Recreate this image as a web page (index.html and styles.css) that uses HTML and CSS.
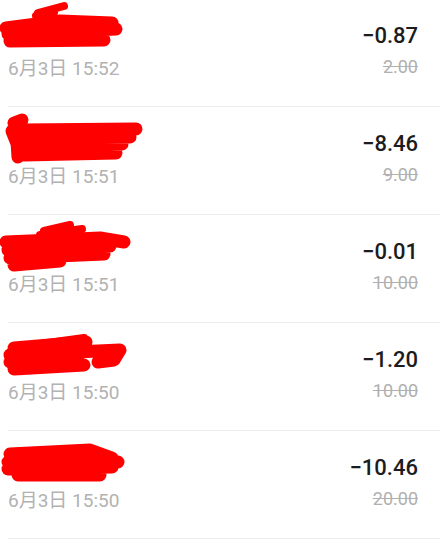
FILE: index.html
```html
<!DOCTYPE html>
<html lang="zh-CN">
<head>
    <meta charset="UTF-8">
    <meta name="viewport" content="width=device-width, initial-scale=1.0">
    <title>账单</title>
    <link rel="stylesheet" href="styles.css">
</head>
<body>
    <div class="list">
        <div class="row">
            <div class="info">
                <svg class="name" width="150" height="58" viewBox="0 0 150 58">
                    <path class="thin" d="M38 14 L64 7 M36 17 L54 13" />
                    <path d="M6 29 L60 22 L112 24 M8 35 L116 30 M10 42 L104 41" />
                </svg>
                <div class="date">6月3日 15:52</div>
            </div>
            <div class="money">
                <div class="amount">−0.87</div>
                <div class="origin">2.00</div>
            </div>
        </div>
        <div class="row">
            <div class="info">
                <svg class="name" width="150" height="58" viewBox="0 0 150 58">
                    <path d="M14 16 L22 13 M12 24 L20 44 M16 20 L18 50" />
                    <path d="M22 23 L136 22 M20 31 L130 30 M18 39 L122 37 M24 48 L116 46" />
                </svg>
                <div class="date">6月3日 15:51</div>
            </div>
            <div class="money">
                <div class="amount">−8.46</div>
                <div class="origin">9.00</div>
            </div>
        </div>
        <div class="row">
            <div class="info">
                <svg class="name" width="150" height="58" viewBox="0 0 150 58">
                    <path class="thin" d="M44 16 L70 10 M40 20 L82 14" />
                    <path d="M6 27 L100 23 L124 27 M8 35 L110 31 M10 43 L104 39 M14 50 L60 46" />
                </svg>
                <div class="date">6月3日 15:51</div>
            </div>
            <div class="money">
                <div class="amount">−0.01</div>
                <div class="origin">10.00</div>
            </div>
        </div>
        <div class="row">
            <div class="info">
                <svg class="name" width="150" height="58" viewBox="0 0 150 58">
                    <path class="thin" d="M40 21 L84 15" />
                    <path d="M14 25 L86 19 M10 32 L120 27 L114 37 L98 39 M10 39 L78 35 M14 46 L84 42" />
                </svg>
                <div class="date">6月3日 15:50</div>
            </div>
            <div class="money">
                <div class="amount">−1.20</div>
                <div class="origin">10.00</div>
            </div>
        </div>
        <div class="row">
            <div class="info">
                <svg class="name" width="150" height="58" viewBox="0 0 150 58">
                    <path d="M10 23 L90 19 L112 27 M8 31 L118 31 M8 38 L112 36 M18 44 L100 44" />
                </svg>
                <div class="date">6月3日 15:50</div>
            </div>
            <div class="money">
                <div class="amount">−10.46</div>
                <div class="origin">20.00</div>
            </div>
        </div>
    </div>
</body>
</html>
```

FILE: styles.css
```css
body {
    margin: 0;
    background-color: #fff;
    font-family: Roboto, "Noto Sans CJK SC", sans-serif;
}
.list {
    margin-top: -1px;
}
.row {
    display: flex;
    justify-content: space-between;
    height: 107px;
    margin-left: 8px;
    padding-right: 22px;
    border-bottom: 1px solid #ececec;
}
.info {
    display: flex;
    flex-direction: column;
}
.name {
    display: block;
    margin-left: -8px;
}
.name path {
    fill: none;
    stroke: #ff0000;
    stroke-width: 13;
    stroke-linecap: round;
    stroke-linejoin: round;
}
.name .thin {
    stroke-width: 8;
}
.date {
    font-size: 19px;
    line-height: 24px;
    color: #b2b2b2;
}
.money {
    display: flex;
    flex-direction: column;
    align-items: flex-end;
    padding-top: 23px;
}
.amount {
    font-size: 22px;
    line-height: 28px;
    font-weight: 500;
    color: #1c1c1c;
}
.origin {
    margin-top: 4px;
    font-size: 18px;
    line-height: 26px;
    color: #b0b0b0;
    text-decoration: line-through;
}
```
